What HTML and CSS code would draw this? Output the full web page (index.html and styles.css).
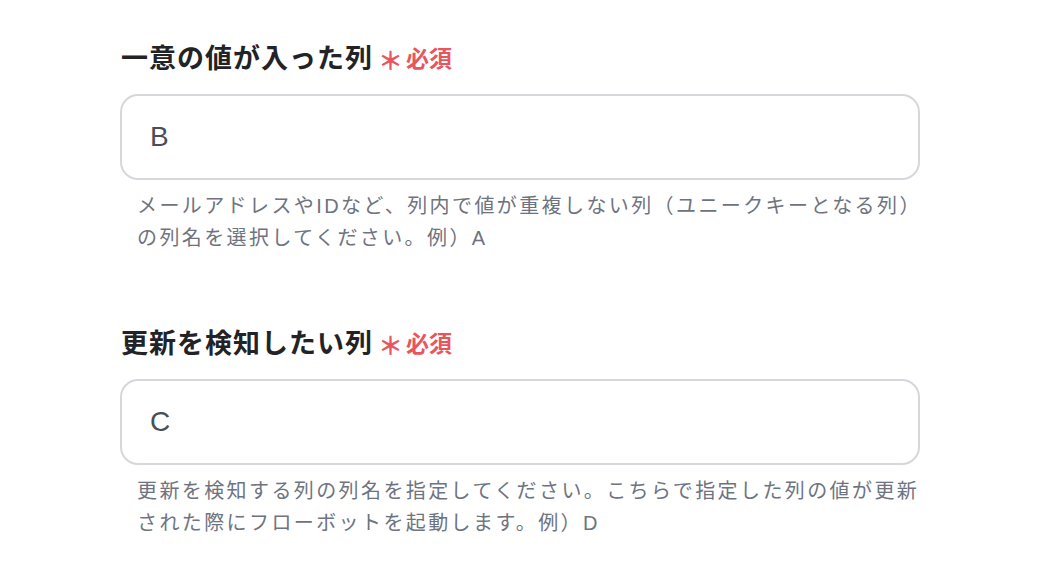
FILE: index.html
```html
<!DOCTYPE html>
<html lang="ja">
<head>
<meta charset="utf-8">
<link rel="stylesheet" href="styles.css">
</head>
<body>
<div class="form">
  <div class="field">
    <div class="label">一意の値が入った列<span class="req"><span class="ast">＊</span>必須</span></div>
    <div class="input">B</div>
    <div class="help">メールアドレスやIDなど、列内で値が重複しない列（ユニークキーとなる列）の列名を選択してください。例）A</div>
  </div>
  <div class="field">
    <div class="label">更新を検知したい列<span class="req"><span class="ast">＊</span>必須</span></div>
    <div class="input">C</div>
    <div class="help">更新を検知する列の列名を指定してください。こちらで指定した列の値が更新された際にフローボットを起動します。例）D</div>
  </div>
</div>
</body>
</html>
```
FILE: styles.css
```css
html, body {
  margin: 0;
  padding: 0;
  background: #ffffff;
}
body {
  font-family: "Liberation Sans", "Noto Sans CJK JP", sans-serif;
}
.form {
  padding: 37px 0 0 120px;
  width: 800px;
  display: flex;
  flex-direction: column;
  gap: 68px;
}
.field {
  display: flex;
  flex-direction: column;
}
.label {
  font-family: "Noto Sans CJK JP", sans-serif;
  font-size: 27px;
  font-weight: 700;
  height: 40px;
  line-height: 40px;
  letter-spacing: 1px;
  color: #222327;
  padding-left: 1px;
  display: flex;
  align-items: center;
}
.req {
  margin-left: 5px;
  color: #e8555d;
  font-size: 23px;
  font-weight: 700;
  letter-spacing: 0;
  display: flex;
  align-items: center;
  height: 40px;
}
.ast {
  font-size: 25px;
  line-height: 25px;
  margin-right: 3px;
  padding-top: 5px;
}
.input {
  margin-top: 17px;
  height: 82px;
  border: 2px solid #d5d7db;
  border-radius: 18px;
  display: flex;
  align-items: center;
  padding-left: 28px;
  font-size: 28px;
  color: #4a4e55;
}
.help {
  margin-top: 10px;
  padding-left: 17px;
  font-size: 20px;
  line-height: 32px;
  letter-spacing: 2.4px;
  color: #6e7380;
}
```
